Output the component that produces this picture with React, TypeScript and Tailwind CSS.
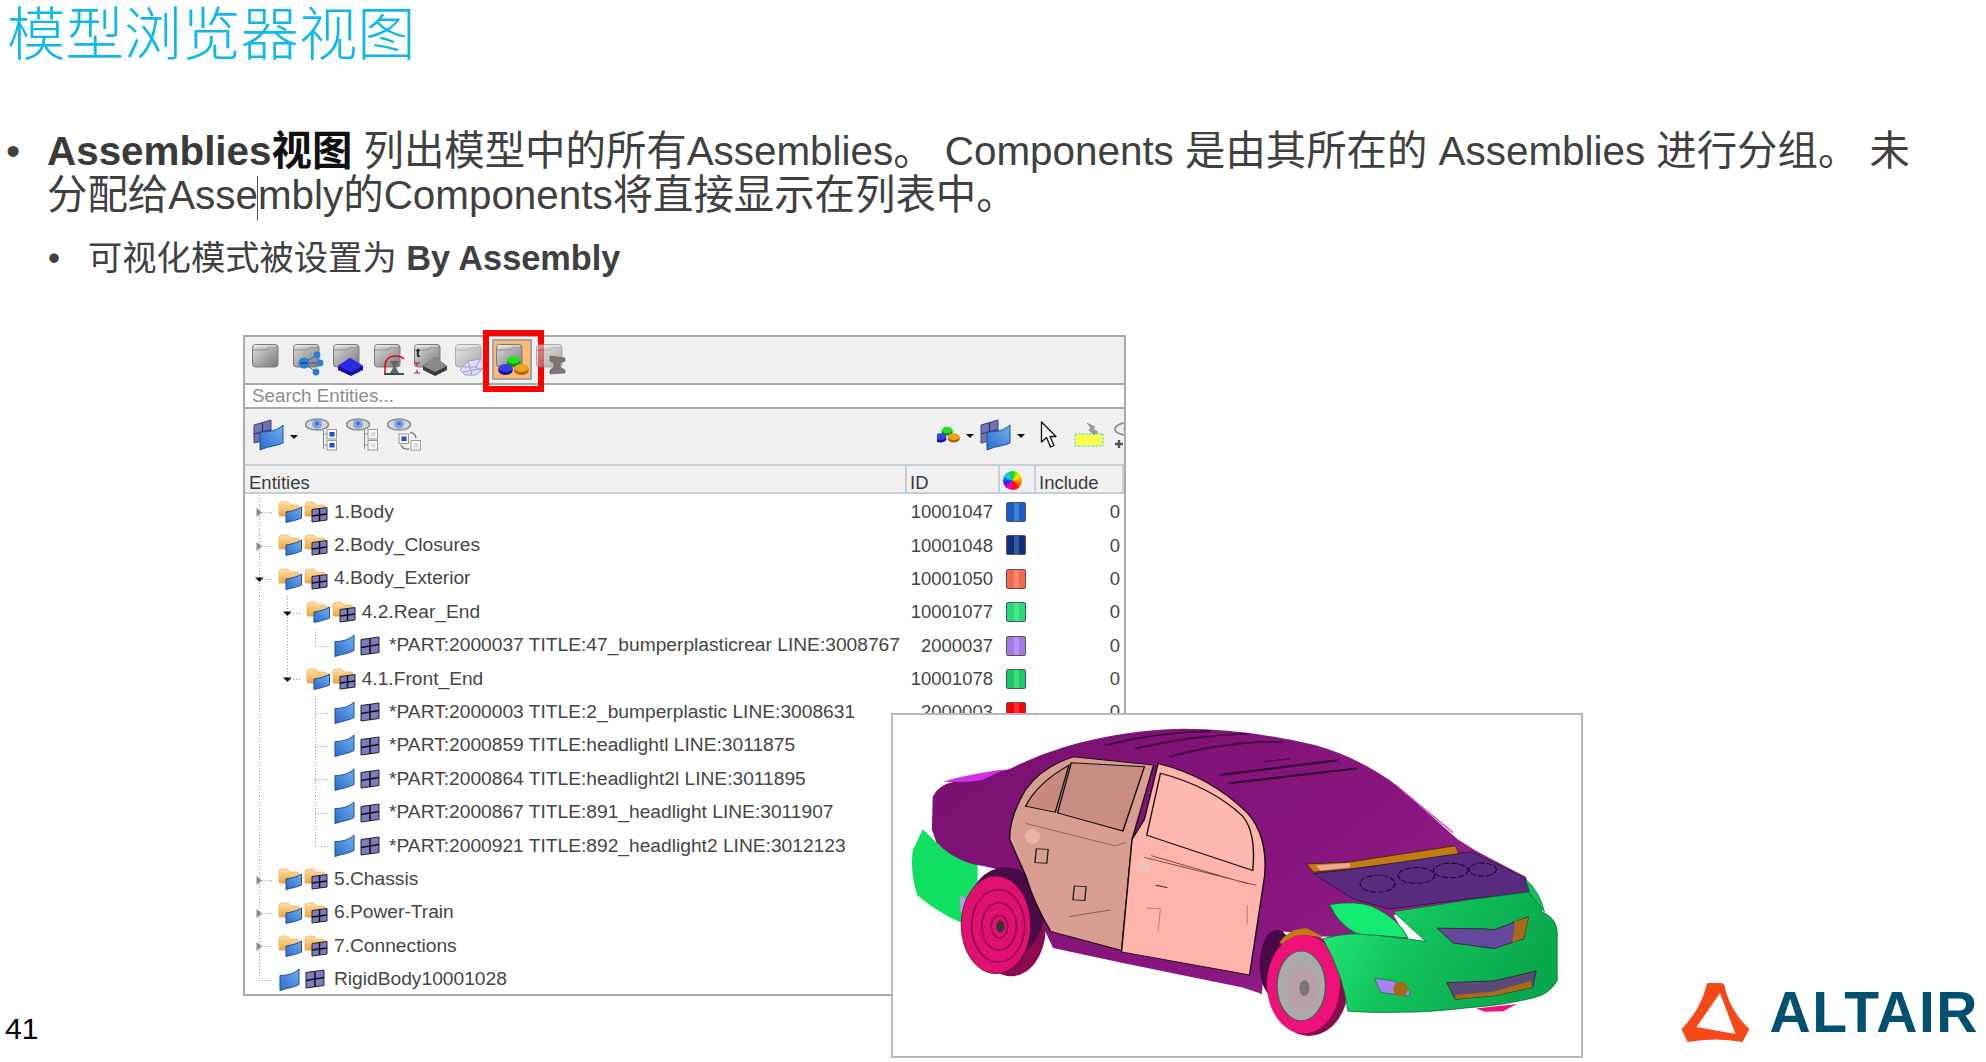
const sans = "font-['Liberation_Sans','Noto_Sans_CJK_SC',sans-serif]";

type Row = {
  level: number;
  kind: "folder" | "part";
  arrow?: "open" | "closed";
  full: number[];
  half: number[];
  text: string;
  id?: string;
  color?: string;
};

const rows: Row[] = [
  { level: 0, kind: "folder", arrow: "closed", full: [14], half: [], text: "1.Body", id: "10001047", color: "#1a5cc8" },
  { level: 0, kind: "folder", arrow: "closed", full: [14], half: [], text: "2.Body_Closures", id: "10001048", color: "#0d2f7f" },
  { level: 0, kind: "folder", arrow: "open", full: [14], half: [], text: "4.Body_Exterior", id: "10001050", color: "#f5694a" },
  { level: 1, kind: "folder", arrow: "open", full: [14, 42], half: [], text: "4.2.Rear_End", id: "10001077", color: "#22dd77" },
  { level: 2, kind: "part", full: [14, 42], half: [70], text: "*PART:2000037 TITLE:47_bumperplasticrear LINE:3008767", id: "2000037", color: "#a07ae8" },
  { level: 1, kind: "folder", arrow: "open", full: [14], half: [42], text: "4.1.Front_End", id: "10001078", color: "#14cc66" },
  { level: 2, kind: "part", full: [14, 70], half: [], text: "*PART:2000003 TITLE:2_bumperplastic LINE:3008631", id: "2000003", color: "#ff0000" },
  { level: 2, kind: "part", full: [14, 70], half: [], text: "*PART:2000859 TITLE:headlightl LINE:3011875" },
  { level: 2, kind: "part", full: [14, 70], half: [], text: "*PART:2000864 TITLE:headlight2l LINE:3011895" },
  { level: 2, kind: "part", full: [14, 70], half: [], text: "*PART:2000867 TITLE:891_headlight LINE:3011907" },
  { level: 2, kind: "part", full: [14], half: [70], text: "*PART:2000921 TITLE:892_headlight2 LINE:3012123" },
  { level: 0, kind: "folder", arrow: "closed", full: [14], half: [], text: "5.Chassis" },
  { level: 0, kind: "folder", arrow: "closed", full: [14], half: [], text: "6.Power-Train" },
  { level: 0, kind: "folder", arrow: "closed", full: [14], half: [], text: "7.Connections" },
  { level: 0, kind: "part", full: [], half: [14], text: "RigidBody10001028" },
];

const Defs = () => (
  <svg className="absolute w-0 h-0">
    <defs>
      <linearGradient id="gf" x1="0" y1="0" x2="1" y2="1">
        <stop offset="0" stopColor="#e0e0e0" />
        <stop offset="1" stopColor="#767676" />
      </linearGradient>
      <linearGradient id="gs" x1="0" y1="1" x2="1" y2="0">
        <stop offset="0" stopColor="#2a6cc6" />
        <stop offset="1" stopColor="#74aef2" />
      </linearGradient>
      <linearGradient id="go" x1="0" y1="0" x2="0" y2="1">
        <stop offset="0" stopColor="#ffe0a8" />
        <stop offset="1" stopColor="#f0a035" />
      </linearGradient>
      <linearGradient id="gg" x1="0" y1="0" x2="1" y2="0.3">
        <stop offset="0" stopColor="#22f078" />
        <stop offset="0.45" stopColor="#12c45c" />
        <stop offset="1" stopColor="#0aa84c" />
      </linearGradient>
      <linearGradient id="gp" x1="0" y1="0" x2="1" y2="0.6">
        <stop offset="0" stopColor="#7a1070" />
        <stop offset="0.75" stopColor="#8a1680" />
        <stop offset="1" stopColor="#962a8c" />
      </linearGradient>
    </defs>
  </svg>
);

const GrayFolder = ({ faded }: { faded?: boolean }) => (
  <g opacity={faded ? 0.6 : 1}>
    <rect x="4.5" y="5.5" width="25.5" height="22.5" rx="3" fill="url(#gf)" stroke="#7c7c7c" />
    <path d="M5 11H19L21 8H30" fill="none" stroke="#8e8e8e" strokeWidth="1" />
    <path d="M6 7H28" fill="none" stroke="#f2f2f2" strokeWidth="1" />
  </g>
);

const Blob = ({ x, y, w, h, top, side }: { x: number; y: number; w: number; h: number; top: string; side: string }) => (
  <g>
    <ellipse cx={x} cy={y + 3} rx={w} ry={h} fill={side} />
    <rect x={x - w} y={y} width={w * 2} height={3} fill={side} />
    <ellipse cx={x} cy={y} rx={w} ry={h} fill={top} />
  </g>
);

const Blobs = () => (
  <g>
    <Blob x={21.5} y={21} w={6.5} h={3.8} top="#20e020" side="#089808" />
    <Blob x={13.5} y={29} w={7} h={4} top="#3a3af0" side="#1414a0" />
    <Blob x={29.5} y={29} w={7} h={4} top="#f0a020" side="#b06a08" />
  </g>
);

const overlays = [
  null,
  <g key="nodes">
    <path d="M15 24L28 16M15 24H31M15 24L27 33" stroke="#557" strokeWidth="1" />
    <circle cx="15" cy="24" r="5.5" fill="#2a7de0" />
    <path d="M12 24h6" stroke="#123" strokeWidth="1" />
    <circle cx="28" cy="16" r="3.4" fill="#2a7de0" />
    <circle cx="31" cy="24" r="3.4" fill="#2a7de0" />
    <circle cx="27" cy="33" r="3.4" fill="#2a7de0" />
  </g>,
  <g key="slab">
    <path d="M9 27L21 19L34 27V31L22 37L9 31Z" fill="#12129a" />
    <path d="M9 27L21 19L34 27L22 33Z" fill="#2a2ae8" />
  </g>,
  <g key="time">
    <path d="M15 34V26Q16 17 26 17Q31 17 34 20" fill="none" stroke="#e01010" strokeWidth="1.6" />
    <path d="M14 35H34" stroke="#222" strokeWidth="1.6" />
    <path d="M20 22h9l-3.5 6 3.5 6h-9l3.5-6z" fill="#666" />
  </g>,
  <g key="thick">
    <path d="M13 27L25 18L37 27V31L25 37L13 31Z" fill="#3c3c3c" />
    <path d="M13 27L25 18L37 27L25 33Z" fill="#8a8a8a" />
    <text x="6" y="18" fontSize="12" fontWeight="700" fill="#111" fontFamily="Liberation Sans">t</text>
    <path d="M4 24h6M7 24v3M4 34h6M7 34v-3" stroke="#e01010" strokeWidth="1.2" fill="none" />
  </g>,
  <g key="mesh" fill="#ddddf2" stroke="#9c9cd6" strokeWidth="1">
    <path d="M9 31L17 22L29 20L35 27L25 36L14 36Z" />
    <path d="M13 28L25 28L29 20M17 22L21 36M25 28L30 32M12 33L33 29" fill="none" />
  </g>,
  <Blobs key="blobs" />,
  <path key="beam" d="M18 17L33 19V22L28 24V28L33 31V34L18 35V31L22 28V24L18 22Z" fill="#847470" stroke="#665a56" strokeWidth="0.6" />,
];

const ToolIcon = ({ index }: { index: number }) => (
  <svg width="40" height="41" viewBox="0 0 40 41" className="block">
    <GrayFolder faded={index === 5 || index === 7} />
    {overlays[index]}
  </svg>
);

const Sheet = () => (
  <svg width="21" height="23" viewBox="0 0 21 23" className="shrink-0">
    <path d="M1 7.5C8 7.5 15 6 20 1V16.5C15 19.5 8 20 1 22.5Z" fill="url(#gs)" stroke="#1c4f9c" />
  </svg>
);

const Grid = () => (
  <svg width="20" height="20" viewBox="0 0 20 20" className="shrink-0">
    <path d="M1 3.5L19 1V16.5L1 19Z" fill="#7c7cc0" stroke="#222" />
    <path d="M10 2.5V18M1 11.5L19 8.5" stroke="#111" strokeWidth="1.5" />
  </svg>
);

const SheetGrid = () => (
  <svg width="31" height="32" viewBox="0 0 31 32" className="shrink-0">
    <path d="M1 6L18 1V20L1 24Z" fill="#7474b4" stroke="#44446c" />
    <path d="M9.5 3.5V22M1 15L18 10.5" stroke="#33335a" strokeWidth="1.2" />
    <path d="M7 13C15 13 24 12 30 6V24C24 27 15 27 7 31Z" fill="url(#gs)" stroke="#1c4f9c" />
  </svg>
);

const FolderSheet = () => (
  <svg width="24" height="22" viewBox="0 0 24 22" className="shrink-0">
    <path d="M1 15V4Q1 1 4 1H9Q11 1 12 4H19Q21 4 21 7V16Z" fill="url(#go)" stroke="#e8a848" strokeWidth="0.6" />
    <path d="M8 11C14 10 19 9 23.5 6V17C19 19 14 20 8 21.5Z" fill="url(#gs)" stroke="#1c4f9c" />
  </svg>
);

const FolderGrid = () => (
  <svg width="24" height="22" viewBox="0 0 24 22" className="shrink-0">
    <path d="M1 15V4Q1 1 4 1H9Q11 1 12 4H19Q21 4 21 7V16Z" fill="url(#go)" stroke="#e8a848" strokeWidth="0.6" />
    <path d="M8 8.5L23 6.5V19L8 21Z" fill="#7c7cc0" stroke="#222" />
    <path d="M15.5 7.5V20M8 15L23 13" stroke="#111" strokeWidth="1.5" />
  </svg>
);

const Guide = ({ row }: { row: Row }) => {
  const width = row.level === 0 && row.kind === "part" ? 34 : row.kind === "part" ? 89 : 33 + row.level * 27.7;
  const trunk = row.kind === "part" ? 14 + (row.level === 0 ? 0 : 56) : 14 + row.level * 28;
  return (
    <svg width={width} height="33.4" className="shrink-0">
      <g stroke="#9a9a9a" strokeDasharray="1 2" fill="none">
        {row.full.map((x) => (
          <path key={x} d={`M${x + 0.5} 0V33.4`} />
        ))}
        {row.half.map((x) => (
          <path key={x} d={`M${x + 0.5} 0V17`} />
        ))}
        <path d={`M${trunk} 17.5H${trunk + 15}`} />
      </g>
      {row.arrow === "closed" && <path d={`M${trunk - 2.5} 13L${trunk + 3} 17.5L${trunk - 2.5} 22Z`} fill="#8a8a8a" />}
      {row.arrow === "open" && <path d={`M${trunk - 4} 15.5H${trunk + 4.5}L${trunk + 0.5} 20Z`} fill="#111" />}
    </svg>
  );
};

const TreeRow = ({ row }: { row: Row }) => (
  <div className="flex h-[33.4px] items-center text-[18.5px] text-[#454545]">
    <div className="flex w-[660px] items-center overflow-hidden">
      <Guide row={row} />
      {row.kind === "folder" ? (
        <div className="flex gap-[2px]">
          <FolderSheet />
          <FolderGrid />
        </div>
      ) : (
        <div className="flex items-center gap-[5px]">
          <Sheet />
          <Grid />
        </div>
      )}
      <span className={`whitespace-nowrap text-[19.2px] ${row.kind === "folder" ? "ml-[6px]" : "ml-[9px]"}`}>{row.text}</span>
    </div>
    <div className="w-[88px] text-right">{row.id}</div>
    <div className="ml-[13px] w-[20px]">
      {row.color && (
        <div className="flex h-[20px] w-[20px] justify-center rounded-[2px] border border-[#555]" style={{ background: row.color }}>
          <div className="h-full w-[5px] bg-white/20" />
        </div>
      )}
    </div>
    <div className="w-[94px] text-right">{row.id ? "0" : ""}</div>
  </div>
);

const DropArrow = () => <div className="h-0 w-0 border-x-[4px] border-t-[4px] border-x-transparent border-t-[#111]" />;

const Eye = () => (
  <g>
    <ellipse cx="12" cy="6.5" rx="11.5" ry="5.5" fill="#d8d8d8" stroke="#8c8c8c" strokeWidth="1.6" />
    <circle cx="12" cy="6" r="5" fill="#7ea8e2" />
    <circle cx="12" cy="5.5" r="2" fill="#4c72b4" />
  </g>
);

const Box = ({ x, y, on }: { x: number; y: number; on?: boolean }) => (
  <g>
    <rect x={x} y={y} width="9.5" height="9.5" fill="#f8f8f8" stroke="#9a9a9a" />
    <rect x={x + 2.5} y={y + 2.5} width="5" height="4.5" fill={on ? "#1a4fd8" : "#dddddd"} />
  </g>
);

const EyeTree = ({ on }: { on: boolean }) => (
  <svg width="34" height="34" viewBox="0 0 34 34">
    <Eye />
    <path d="M18.5 12V31M18.5 16H22M18.5 27H22" stroke="#8c8c8c" fill="none" />
    <Box x={22} y={11.5} on={on} />
    <Box x={22} y={22.5} on={on} />
  </svg>
);

const EyeSwap = () => (
  <svg width="34" height="34" viewBox="0 0 34 34">
    <Eye />
    <Box x={12} y={16} on />
    <Box x={24} y={22.5} />
    <path d="M23 15Q28 14 29 20M14 27Q16 32 22 31" stroke="#777" strokeWidth="1.4" fill="none" />
  </svg>
);

const Cursor = () => (
  <svg width="17" height="28" viewBox="0 0 17 28">
    <path d="M1.5 1V21L6.5 16.5L10.5 26L14 24.5L10 15.5H16Z" fill="#fff" stroke="#111" strokeWidth="1.3" strokeLinejoin="round" />
  </svg>
);

const Marquee = () => (
  <svg width="30" height="25" viewBox="0 0 30 25">
    <rect x="1" y="12" width="28" height="12" fill="#ffff50" stroke="#18d8e8" strokeDasharray="2 1.5" />
    <path d="M13 1L21 5L19 7L24 10L20 13L15 8L17 6Z" fill="#9a9a9a" stroke="#777" strokeWidth="0.5" />
  </svg>
);

const ClippedEye = () => (
  <svg width="22" height="28" viewBox="0 0 22 28" className="shrink-0">
    <ellipse cx="14" cy="8" rx="12" ry="6" fill="#ececec" stroke="#8c8c8c" strokeWidth="1.6" />
    <circle cx="15" cy="8" r="4.5" fill="#76a4e0" />
    <path d="M6 19v8M2 23h8" stroke="#555" strokeWidth="2.4" />
  </svg>
);

const Panel = () => (
  <div className={`h-[661px] w-[883px] shrink-0 self-start border-2 border-[#a9a9a9] bg-white ${sans}`}>
    <div className="flex h-[46px] bg-[#f0f0f0] pl-[3px] pt-[2px]">
      {overlays.map((_, i) => (
        <div key={i} className="relative h-[41px] w-[40.6px]">
          {i === 6 ? (
            <>
              <div className="absolute inset-0 border-2 border-[#a5a5a5] bg-[#ffb973]" />
              <div className="relative">
                <ToolIcon index={i} />
              </div>
              <div className="absolute left-[-9px] top-[-9px] h-[62px] w-[61px] border-[6px] border-[#ff0000]" />
            </>
          ) : (
            <ToolIcon index={i} />
          )}
        </div>
      ))}
    </div>
    <div className="flex h-[26px] items-center border-y-2 border-[#a9a9a9] bg-white pl-[7px] text-[18.8px] text-[#8c8c8c]">Search Entities...</div>
    <div className="flex h-[55px] items-center justify-between overflow-hidden bg-[#f0f0f0] pb-[4px] pl-[8px]">
      <div className="flex items-center">
        <SheetGrid />
        <div className="ml-[6px] mt-[4px]">
          <DropArrow />
        </div>
        <div className="ml-[7px] flex gap-[7px]">
          <EyeTree on />
          <EyeTree on={false} />
          <EyeSwap />
        </div>
      </div>
      <div className="flex items-center">
        <svg width="26" height="20" viewBox="10 15 30 24">
          <Blobs />
        </svg>
        <div className="ml-[3px] mt-[3px]">
          <DropArrow />
        </div>
        <div className="ml-[6px]">
          <SheetGrid />
        </div>
        <div className="ml-[6px] mt-[3px]">
          <DropArrow />
        </div>
        <div className="ml-[15px]">
          <Cursor />
        </div>
        <div className="ml-[17px]">
          <Marquee />
        </div>
        <div className="ml-[9px] w-[11px] overflow-hidden">
          <ClippedEye />
        </div>
      </div>
    </div>
    <div className="flex h-[30px] border-y-2 border-[#c4d0d8] bg-[#f0f0f0] text-[18.5px] leading-[33px] text-[#3c3c3c]">
      <div className="w-[660px] pl-[4px]">Entities</div>
      <div className="w-[93px] border-l-2 border-[#c4d0d8] pl-[3px]">ID</div>
      <div className="flex w-[36px] items-center border-l-2 border-[#c4d0d8] pl-[3px] pt-[3px]">
        <div className="h-[19px] w-[19px] rounded-full bg-[conic-gradient(#10d010,#f0f000,#ff8000,#ff0000,#ff00c0,#2020ff,#00e0f0,#10d010)]" />
      </div>
      <div className="flex-1 border-x-2 border-[#c4d0d8] pl-[3px]">Include</div>
    </div>
    <div className="pt-[1px]">
      {rows.map((row) => (
        <TreeRow key={row.text} row={row} />
      ))}
    </div>
  </div>
);

const Car = () => (
  <svg width="688" height="341" viewBox="25 43 1505 1035" preserveAspectRatio="none" className="block">
    {/* rear wheel back */}
    <ellipse cx="283" cy="690" rx="76" ry="146" fill="#8a0a4e" />
    {/* rear bumper */}
    <path d="M90 390L120 430Q150 475 210 495V680L172 672Q120 640 78 590Q62 520 68 455Z" fill="#10e060" />
    <path d="M172 590L185 600V650L172 640Z" fill="#b49ae8" />
    {/* body */}
    <path
      d="M112 290Q125 255 160 245L280 207Q340 165 400 140Q530 88 660 85Q800 85 950 135Q1050 175 1130 260L1260 420L1300 455L1410 535L1420 590L1120 650L1150 725L965 715L880 700Q840 740 832 890L790 870L525 795L375 750L355 690Q335 590 290 530Q250 505 197 495Q150 475 120 430L110 390Z"
      fill="url(#gp)"
    />
    <path d="M135 245Q200 220 270 208L220 240Q170 250 135 245Z" fill="#d030e0" />
    {/* rear wheel well */}
    <ellipse cx="272" cy="640" rx="84" ry="135" fill="#4a0a48" />
    {/* roof lines */}
    <path d="M490 135Q600 95 720 92M555 145Q680 105 800 100M630 170Q760 120 880 125" stroke="#3a0838" strokeWidth="5" fill="none" />
    <path d="M740 225L1000 180M760 250L1040 205" stroke="#2a062a" strokeWidth="6" fill="none" />
    <path d="M835 185L895 175" stroke="#3a0838" strokeWidth="3" />
    <path d="M1130 262L1250 400" stroke="#c040c8" strokeWidth="3" fill="none" />
    {/* rear door */}
    <path d="M280 420Q280 350 315 270Q350 200 420 170L595 195L548 420L525 758L370 700Q335 620 315 530Z" fill="#d89c90" stroke="#111" strokeWidth="3" />
    <path d="M315 320Q340 250 410 195L380 338Z" fill="#c88a80" stroke="#111" strokeWidth="3" />
    <path d="M385 340L415 188L575 200L528 395Z" fill="#c98c82" stroke="#111" strokeWidth="3" />
    <path d="M315 372L510 440L535 430" stroke="#8a5a50" strokeWidth="2" fill="none" />
    <rect x="337" y="450" width="26" height="42" fill="none" stroke="#222" strokeWidth="3" transform="rotate(4 350 470)" />
    <rect x="420" y="563" width="26" height="42" fill="none" stroke="#222" strokeWidth="3" transform="rotate(4 433 584)" />
    <ellipse cx="330" cy="412" rx="17" ry="22" fill="#eab2a8" />
    <path d="M410 655L500 635" stroke="#7a5048" strokeWidth="2" />
    {/* front door */}
    <path d="M605 190Q720 230 800 340Q845 410 838 530L805 832L525 762L548 420L575 360Z" fill="#ffb4ab" stroke="#111" strokeWidth="3" />
    <path d="M580 408L610 220Q720 260 790 350Q820 400 812 515Z" fill="#ffb8b0" stroke="#111" strokeWidth="3" />
    <path d="M575 475L820 560M590 470L800 555" stroke="#6a4038" strokeWidth="2.5" fill="none" />
    <ellipse cx="572" cy="500" rx="17" ry="22" fill="#f4c0b8" />
    <path d="M580 630H610L605 700M800 620V680" stroke="#a87870" strokeWidth="2" fill="none" />
    <path d="M600 560L625 567" stroke="#222" strokeWidth="3" />
    {/* cowl and hood */}
    <path d="M930 495L1020 490L1255 440L1265 470L1030 510L945 520Z" fill="#c27a12" stroke="#3a2204" strokeWidth="2" />
    <path d="M950 500L1025 492V505L960 515Z" fill="#f0a898" />
    <path d="M945 525Q1040 510 1290 458L1405 535L1420 582L1290 600L1110 632L1030 600Z" fill="#5a2c80" stroke="#2a1040" strokeWidth="2" />
    <g fill="none" stroke="#1c0c30" strokeWidth="3" strokeDasharray="14 4">
      <ellipse cx="1085" cy="555" rx="38" ry="26" />
      <ellipse cx="1170" cy="530" rx="40" ry="24" />
      <ellipse cx="1245" cy="515" rx="38" ry="22" />
      <ellipse cx="1315" cy="512" rx="30" ry="20" />
    </g>
    {/* front wheel */}
    <ellipse cx="865" cy="800" rx="38" ry="105" fill="#4a0a48" />
    <path d="M870 735Q890 690 930 690L965 715L940 760Z" fill="#c27a12" />
    <ellipse cx="935" cy="865" rx="86" ry="152" fill="#8a0a4e" />
    <ellipse cx="923" cy="860" rx="80" ry="150" fill="#ee1278" />
    <ellipse cx="918" cy="865" rx="53" ry="106" fill="#aaaaaa" stroke="#555" strokeWidth="3" />
    <ellipse cx="922" cy="870" rx="32" ry="70" fill="#b8a0a8" />
    <ellipse cx="925" cy="872" rx="11" ry="24" fill="#777" />
    {/* rear wheel */}
    <ellipse cx="250" cy="680" rx="76" ry="148" fill="#e01070" stroke="#6a0a40" strokeWidth="2" />
    <g fill="none" stroke="#7a0a48" strokeWidth="3">
      <ellipse cx="255" cy="683" rx="58" ry="110" />
      <ellipse cx="257" cy="685" rx="38" ry="72" />
      <ellipse cx="258" cy="685" rx="18" ry="34" />
    </g>
    <ellipse cx="260" cy="685" rx="9" ry="18" fill="#333" />
    {/* front bumper */}
    <path d="M965 722Q1030 698 1090 712L1190 730L1120 640L1290 603L1418 580Q1440 610 1445 640Q1476 660 1478 700L1478 850Q1460 890 1430 900Q1360 925 1280 932Q1200 945 1140 945Q1080 948 1020 942Q1010 830 965 722Z" fill="url(#gg)" stroke="#0a6a34" strokeWidth="2" />
    <path d="M1408 540Q1440 580 1450 640L1420 590Z" fill="#12c45c" stroke="#0a6a34" strokeWidth="2" />
    <path d="M980 618Q1040 605 1075 625Q1130 660 1152 720L1040 707Q1000 680 980 618Z" fill="#14ea70" stroke="#0a5a2c" strokeWidth="2" />
    <path d="M1215 690L1320 692L1340 695L1415 655L1405 722L1340 752L1250 735Z" fill="#63489c" stroke="#222" strokeWidth="2" />
    <path d="M1385 670L1415 657L1405 720L1380 735Z" fill="#a86a18" />
    <path d="M1236 855L1340 850L1432 820L1424 870L1340 895L1255 906Z" fill="#5a4a7a" stroke="#222" strokeWidth="2" />
    <path d="M1255 893L1340 882L1420 850L1424 870L1340 895L1255 906Z" fill="#a86a18" />
    <path d="M1078 842L1120 850L1156 880L1155 897L1092 885Z" fill="#a484f0" stroke="#185a30" strokeWidth="1.5" />
    <ellipse cx="1135" cy="875" rx="16" ry="22" fill="#a86a18" />
    <path d="M1300 934L1390 920L1360 942L1320 944Z" fill="#ee1278" />
  </svg>
);

const AltairLogo = () => (
  <div className={`flex items-center gap-[18px] ${sans}`}>
    <svg width="71" height="61" viewBox="0 0 70 61">
      <path
        fillRule="evenodd"
        d="M27 1H41Q43 1 44 4Q50 30 69 47L62 60Q35 55 7 60L1 47Q20 28 26 3Z M39.5 11L16 45L55 52Z"
        fill="#f7481a"
      />
    </svg>
    <span className="text-[57px] font-bold leading-none tracking-[1.5px] text-[#00506f]">ALTAIR</span>
  </div>
);

export default function App() {
  return (
    <div className={`flex h-[1062px] w-[1986px] flex-col overflow-hidden bg-white ${sans}`}>
      <Defs />
      <h1 className="h-[68px] whitespace-nowrap pl-[7px] text-[58.4px] font-light leading-[70px] text-[#10b8e8]">模型浏览器视图</h1>

      <div className="ml-[6px] mt-[61px] flex text-[40.4px] leading-[44px] text-[#404040]">
        <span className="w-[41px] shrink-0">•</span>
        <p className="whitespace-nowrap">
          <b className="text-[#3a3a3a]">Assemblies<span className="text-[#111]">视图</span></b> 列出模型中的所有Assemblies。 Components 是由其所在的 Assemblies 进行分组。 未
          <br />
          分配给Asse
          <span className="mx-[-0.5px] inline-block h-[44px] w-px bg-[#555] align-middle" />
          mbly的Components将直接显示在列表中。
        </p>
      </div>

      <div className="ml-[48px] mt-[16px] flex h-[44px] items-center text-[34.3px] text-[#404040]">
        <span className="w-[40px] shrink-0">•</span>
        <p className="whitespace-nowrap">
          可视化模式被设置为 <b>By Assembly</b>
        </p>
      </div>

      <div className="relative mt-[55px] flex flex-1">
        <div className="flex w-[243px] shrink-0 items-end pb-[18px] pl-[5px] text-[30px] leading-none text-black">41</div>
        <Panel />
        <div className="flex flex-1 items-end justify-end pb-[19px] pr-[7px]">
          <AltairLogo />
        </div>
        <div className="absolute left-[891px] top-[378px] h-[345px] w-[692px] border-2 border-[#b8b8b8] bg-white">
          <Car />
        </div>
      </div>
    </div>
  );
}
